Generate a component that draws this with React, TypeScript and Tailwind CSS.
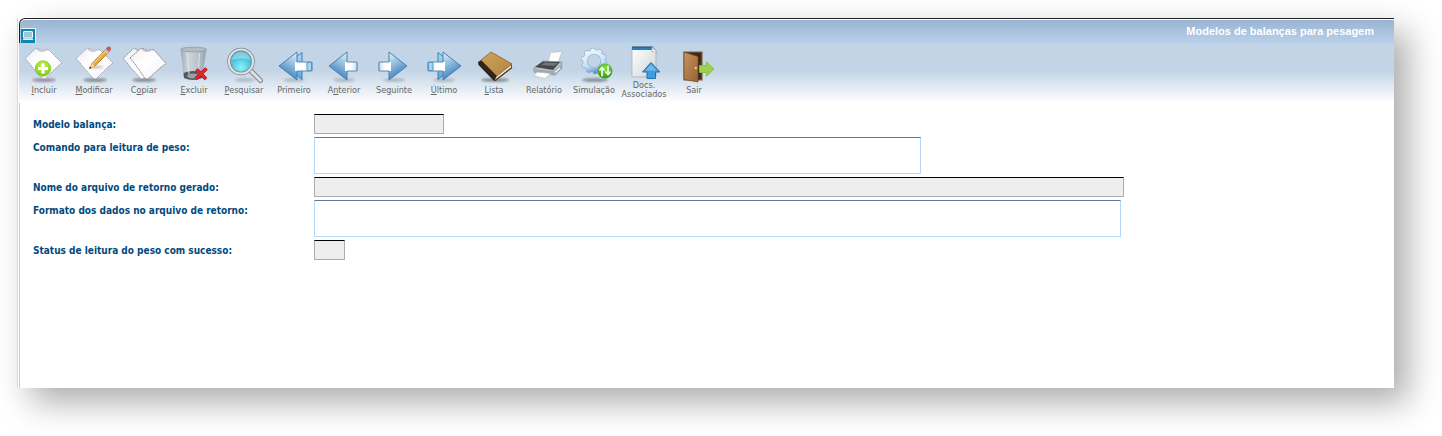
import type { ReactNode } from 'react'

// Glossy gradients shared by the toolbar drawings
function IconDefs() {
  return (
    <svg className="absolute h-0 w-0" aria-hidden="true">
      <defs>
        <linearGradient id="paper" x1="0" y1="0" x2="1" y2="1">
          <stop offset="0" stopColor="#ececf0" />
          <stop offset="0.4" stopColor="#ffffff" />
          <stop offset="1" stopColor="#f4f4f6" />
        </linearGradient>
        <radialGradient id="green" cx="0.5" cy="0.3" r="0.7">
          <stop offset="0" stopColor="#c8f04e" />
          <stop offset="1" stopColor="#7ccb1c" />
        </radialGradient>
        <radialGradient id="darkGreen" cx="0.5" cy="0.3" r="0.7">
          <stop offset="0" stopColor="#8ade4a" />
          <stop offset="1" stopColor="#2a9a12" />
        </radialGradient>
        <linearGradient id="arrowHead" x1="0.7" y1="0" x2="0.3" y2="1">
          <stop offset="0" stopColor="#d2e8f6" />
          <stop offset="0.45" stopColor="#84b2d8" />
          <stop offset="0.75" stopColor="#4f8cc2" />
          <stop offset="1" stopColor="#7db4dc" />
        </linearGradient>
        <linearGradient id="arrowBack" x1="0" y1="0" x2="0" y2="1">
          <stop offset="0" stopColor="#a9dcf6" />
          <stop offset="1" stopColor="#58a4da" />
        </linearGradient>
        <linearGradient id="arrowShaft" x1="0" y1="0" x2="1" y2="0">
          <stop offset="0" stopColor="#ffffff" />
          <stop offset="0.5" stopColor="#ffffff" />
          <stop offset="1" stopColor="#c3e2f7" />
        </linearGradient>
        <linearGradient id="bin" x1="0" y1="0" x2="1" y2="0">
          <stop offset="0" stopColor="#98a4ad" />
          <stop offset="0.3" stopColor="#cfd7dd" />
          <stop offset="0.7" stopColor="#b4bec6" />
          <stop offset="1" stopColor="#929da6" />
        </linearGradient>
        <radialGradient id="lens" cx="0.5" cy="0.75" r="0.75">
          <stop offset="0" stopColor="#8ff0fa" />
          <stop offset="0.6" stopColor="#45c0dc" />
          <stop offset="1" stopColor="#2a9cc4" />
        </radialGradient>
        <linearGradient id="leather" x1="0" y1="0" x2="1" y2="1">
          <stop offset="0" stopColor="#d2a55a" />
          <stop offset="1" stopColor="#b08340" />
        </linearGradient>
        <linearGradient id="gear" gradientUnits="userSpaceOnUse" x1="16" y1="4" x2="24" y2="29">
          <stop offset="0" stopColor="#f2fafe" />
          <stop offset="0.65" stopColor="#c3def4" />
          <stop offset="1" stopColor="#4f7fc0" />
        </linearGradient>
        <linearGradient id="sheet" x1="0" y1="0" x2="1" y2="1">
          <stop offset="0" stopColor="#ffffff" />
          <stop offset="1" stopColor="#cfd3d6" />
        </linearGradient>
        <linearGradient id="door" x1="0" y1="0" x2="1" y2="1">
          <stop offset="0" stopColor="#c8935c" />
          <stop offset="1" stopColor="#946435" />
        </linearGradient>
        <filter id="soft" x="-30%" y="-100%" width="160%" height="300%">
          <feGaussianBlur stdDeviation="1" />
        </filter>
      </defs>
    </svg>
  )
}

function Icon({ children }: { children: ReactNode }) {
  return (
    <svg viewBox="0 0 44 36" className="h-9 w-11 overflow-visible" aria-hidden="true">
      {children}
    </svg>
  )
}

function Ground({ cx = 22, rx = 12, fill = '#6d7278' }: { cx?: number; rx?: number; fill?: string }) {
  return <ellipse cx={cx} cy="35" rx={rx} ry="2" fill={fill} opacity="0.7" filter="url(#soft)" />
}

function Shirt({ x = 0, stroke = '#a9a9b4' }: { x?: number; stroke?: string }) {
  return (
    <g transform={`translate(${x} 0)`}>
      <path
        d="M3 13.5 L13 4 Q15 3 17 4 Q20 6.5 24 4.5 L27 5 L31 9 L40 18 L35 22 L24 33 Q22 34.5 20 33 L11 23 L8 19 Z"
        fill="url(#paper)"
        stroke={stroke}
        strokeWidth="1"
        strokeDasharray="2 0.6"
      />
      <path d="M14.5 4.5 Q19 9 25.5 5 L23 4.5 Q19 6 16 4 Z" fill="#c9c9cf" />
    </g>
  )
}

function InsertIcon() {
  return (
    <Icon>
      <Ground fill="#8a6c90" />
      <Shirt stroke="#a99fc0" />
      <circle cx="21" cy="23.5" r="7.8" fill="url(#green)" stroke="#7cc024" strokeWidth="0.6" />
      <path d="M21 18.5v10M16 23.5h10" stroke="#fff" strokeWidth="3.2" />
    </Icon>
  )
}

function EditIcon() {
  return (
    <Icon>
      <Ground cx={23} />
      <Shirt x={1} />
      <ellipse cx="24" cy="22" rx="7" ry="1.5" fill="#9a9a9a" opacity="0.6" filter="url(#soft)" />
      <path d="M17.5 23.5 L20 18.5 L34.5 3.5 L37.5 6.5 L22.5 21.5 Z" fill="#f7a62b" stroke="#9a6420" strokeWidth="0.7" />
      <path d="M20.5 19.5 L34 5.5" stroke="#ffe08a" strokeWidth="1" />
      <path d="M17.5 23.5 L20 18.5 L22.5 21.5 Z" fill="#f5deb0" />
      <path d="M17 24 L18.4 21.6 L19.6 22.8 Z" fill="#333" />
      <path d="M33 5 L36 8" stroke="#c9ced4" strokeWidth="2" />
      <circle cx="36.8" cy="3.8" r="2.3" fill="#c4586a" />
    </Icon>
  )
}

function CopyIcon() {
  return (
    <Icon>
      <Ground />
      <Shirt x={-2} stroke="#9c9ca2" />
      <path
        d="M8 13 L18 4 Q20 3 22 4 Q25 6.5 29 4.5 L32 5 L44 18.5 L38 23 L27 33 Q24 35 22 32 L13 19 Z"
        fill="url(#paper)"
        stroke="#8f8f96"
        strokeWidth="1"
        strokeDasharray="2 0.6"
      />
      <path d="M19.5 4.5 Q24 9 30.5 5 L28 4.5 Q24 6 21 4 Z" fill="#c0c0c6" />
    </Icon>
  )
}

function DeleteIcon() {
  return (
    <Icon>
      <path d="M8.5 4.5 L12 33 Q21 37 30 33 L34.5 4.5 Z" fill="url(#bin)" opacity="0.9" />
      <path d="M11.5 28 L12 33 Q21 37 30 33 L31 28 Q21 24 11.5 28 Z" fill="#50575d" />
      <ellipse cx="21" cy="31" rx="6" ry="2.5" fill="#9aa1a6" />
      <path d="M15 8 L17 29M27.5 8 L26 29" stroke="#dfe5ea" strokeWidth="1.2" opacity="0.8" />
      <ellipse cx="21.5" cy="4.5" rx="13" ry="2.3" fill="#b4bdc4" stroke="#8e999f" strokeWidth="0.8" />
      <path d="M24.5 24.5 L34 34M34.5 23.5 L23.5 34" stroke="#b31217" strokeWidth="3.6" />
      <path d="M24.5 24.5 L34 34M34.5 23.5 L23.5 34" stroke="#e8262b" strokeWidth="2.2" />
    </Icon>
  )
}

function SearchIcon() {
  return (
    <Icon>
      <Ground cx={23} rx={10} fill="#a2adb6" />
      <path d="M28 25 L38.5 35.5" stroke="#80878e" strokeWidth="5" strokeLinecap="round" />
      <path d="M28 25 L38.5 35.5" stroke="#dfe3e7" strokeWidth="3" strokeLinecap="round" />
      <circle cx="19" cy="16.5" r="12" fill="url(#lens)" stroke="#80878e" strokeWidth="3.6" />
      <circle cx="19" cy="16.5" r="12" fill="none" stroke="#dce1e5" strokeWidth="2.2" />
      <path d="M9.5 15 Q11 7 19 6.5 Q27 7 28.5 15 Q19 11.5 9.5 15 Z" fill="#fff" opacity="0.35" />
    </Icon>
  )
}

// Left pointing by default; the mirror is used for the forward buttons
function ArrowIcon({ forward, double }: { forward?: boolean; double?: boolean }) {
  const end = double ? 40 : 35
  const mirror = double ? 46 : 42
  return (
    <Icon>
      <Ground rx={11} fill="#a2adb6" />
      <g transform={forward ? `translate(${mirror} 0) scale(-1 1)` : undefined}>
        {double && <path d="M23 13 L30 7.5 V34.5 L23 29 Z" fill="url(#arrowBack)" stroke="#3f7fb5" strokeWidth="1" />}
        <path d="M7 21 L25 7 V35 Z" fill="url(#arrowHead)" stroke="#4a80ad" strokeWidth="1" strokeLinejoin="round" />
        <path d={`M23 17 H${end - 1} Q${end} 17 ${end} 18 V25 Q${end} 26 ${end - 1} 26 H23 Z`} fill="url(#arrowShaft)" />
        <path d={`M25 17 H${end - 1} Q${end} 17 ${end} 18 V25 Q${end} 26 ${end - 1} 26 H25`} fill="none" stroke="#5a8bb5" strokeWidth="1.2" />
        {double && <path d="M35 17.5 H39.5 V25.5 H35 Z" fill="#a5d5f3" stroke="#5a95c4" strokeWidth="1" />}
      </g>
    </Icon>
  )
}

function ListIcon() {
  return (
    <Icon>
      <Ground cx={23} rx={14} />
      <path d="M22 32 L39.5 19 L39.5 23 L23 36 Z" fill="#f1ede2" stroke="#4c3a20" strokeWidth="0.8" />
      <path d="M6 17 L10 14.5 L25 31 L22 36 L6.5 20 Z" fill="#33241b" />
      <path d="M9 15 L19 7 L40 19 L25 31 Z" fill="url(#leather)" stroke="#8a6228" strokeWidth="0.8" />
      <path d="M23 35.5 L40 22.5" stroke="#54391a" strokeWidth="1.2" />
    </Icon>
  )
}

function ReportIcon() {
  return (
    <Icon>
      <path d="M26 17 L28.5 7.5 L40 6.5 L36 18 Z" fill="#fdfdfd" stroke="#c0c4c8" strokeWidth="0.8" />
      <path d="M12 23 L21 16 L39.5 17 L40 23 L33 30 L12 27 Z" fill="#b9bec2" stroke="#858b90" strokeWidth="0.8" />
      <path d="M13 22 L21 16.5 L38 17 L31 25 Z" fill="#43484d" />
      <path d="M19 20 L23 17.5 L36 18 L32 21 Z" fill="#6f757a" />
      <path d="M12 24 L31 26.5 L39 20 L39 24 L32.5 30 L12 27 Z" fill="#a1a7ab" />
      <path d="M33 27.5 L38 23" stroke="#f0f2f3" strokeWidth="1.5" />
      <path d="M15 27 L29 28.5 L23 33.5 L12 31 Z" fill="#fff" stroke="#b5babd" strokeWidth="0.7" />
    </Icon>
  )
}

function SimulationIcon() {
  return (
    <Icon>
      <Ground cx={23} rx={13} />
      {/* dashed outer ring forms the ten teeth of the gear */}
      <circle cx="22" cy="16" r="11.2" fill="none" stroke="#8badd0" strokeWidth="4" strokeDasharray="4.2 2.837" />
      <circle cx="22" cy="16" r="9" fill="none" stroke="#8badd0" strokeWidth="5" />
      <circle cx="22" cy="16" r="11.2" fill="none" stroke="url(#gear)" strokeWidth="2.8" strokeDasharray="3.4 3.637" strokeDashoffset="-0.4" />
      <circle cx="22" cy="16" r="9" fill="none" stroke="url(#gear)" strokeWidth="3.8" />
      <circle cx="33" cy="26" r="7.5" fill="url(#darkGreen)" />
      <path d="M30.8 30.5 H30 V24.500M27.500 25.500 L30 22.500 L32.500 25.500M35.200 21.500 H36 V27.500M33.500 26.500 L36 29.500 L38.500 26.500" fill="none" stroke="#fff" strokeWidth="1.6" />
    </Icon>
  )
}

function DocsIcon() {
  return (
    <Icon>
      <path d="M10 2 H31 L34 5 V32 H10 Z" fill="url(#sheet)" stroke="#a5aaae" strokeWidth="0.7" />
      <path d="M10 2 H31 L33 5 H10 Z" fill="#2e7fb9" />
      <path d="M10 2 H31" stroke="#1d5689" strokeWidth="1" />
      <path d="M30 2 L35 7 H30 Z" fill="#eef2f5" stroke="#9aa5ad" strokeWidth="0.6" />
      <path d="M29 17.5 L38 27 H33.500 V33.500 H25 V27 H20.500 Z" fill="#3e9ede" stroke="#2670a8" strokeWidth="1" strokeLinejoin="round" />
      <path d="M29 19.5 L34.500 25.500 H23.500 Z" fill="#6fbcec" />
    </Icon>
  )
}

function ExitIcon() {
  return (
    <Icon>
      <path d="M12 7 H30 V35 H12 Z" fill="#3b2a1c" stroke="#8c6236" strokeWidth="1.2" />
      <path d="M12 7 L26 11.500 V37 L12 34.500 Z" fill="url(#door)" stroke="#6e4521" strokeWidth="0.7" />
      <circle cx="23.800" cy="23" r="1.200" fill="#f2cf63" />
      <path d="M27.500 20.500 H34.500 V17 L42 24 L34.500 31 V27.500 H27.500 Z" fill="#9fcf4f" stroke="#8abb48" strokeWidth="0.9" />
    </Icon>
  )
}

const actions: { label: ReactNode; icon: ReactNode }[] = [
  { label: <><u>I</u>ncluir</>, icon: <InsertIcon /> },
  { label: <><u>M</u>odificar</>, icon: <EditIcon /> },
  { label: <>C<u>o</u>piar</>, icon: <CopyIcon /> },
  { label: <><u>E</u>xcluir</>, icon: <DeleteIcon /> },
  { label: <><u>P</u>esquisar</>, icon: <SearchIcon /> },
  { label: 'Primeiro', icon: <ArrowIcon double /> },
  { label: <>A<u>n</u>terior</>, icon: <ArrowIcon /> },
  { label: <>Se<u>g</u>uinte</>, icon: <ArrowIcon forward /> },
  { label: <><u>Ú</u>ltimo</>, icon: <ArrowIcon forward double /> },
  { label: <><u>L</u>ista</>, icon: <ListIcon /> },
  { label: 'Relatório', icon: <ReportIcon /> },
  { label: 'Simulação', icon: <SimulationIcon /> },
  { label: <><span className="block">Docs.</span><span className="block">Associados</span></>, icon: <DocsIcon /> },
  { label: 'Sair', icon: <ExitIcon /> },
]

function Toolbar() {
  return (
    <nav className="-ml-px flex h-[60px] bg-linear-to-b from-[#c2d4e6] from-45% to-white pt-0.5">
      {actions.map((action, i) => (
        <button key={i} type="button" className="flex w-[50px] shrink-0 flex-col items-center">
          {action.icon}
          <span className="flex h-[18px] items-center whitespace-nowrap text-center font-['DejaVu_Sans_Condensed','DejaVu_Sans',sans-serif] text-[9px] leading-[9px] text-[#666]">
            <span>{action.label}</span>
          </span>
        </button>
      ))}
    </nav>
  )
}

function TitleBar() {
  return (
    <header className="flex h-[25px] items-end justify-between rounded-tl-md border-l border-t border-[#222] bg-linear-to-b from-[#98b3d0] to-[#b9d0ea] pl-px shadow-[inset_0_1px_0_#fff]">
      <svg viewBox="0 0 15 15" className="h-[15px] w-[15px]" aria-hidden="true">
        <rect width="15" height="15" fill="#e8f2f8" />
        <rect width="14" height="14" y="1" fill="#0f86ad" />
        <rect x="2.500" y="3.500" width="9" height="6.500" rx="0.500" fill="#9fc6d6" stroke="#f2fafd" />
        <path d="M1.500 12 H12.500 L11.500 10.500 H2.500 Z" fill="#dff0f6" />
      </svg>
      <h1 className="self-center pr-5 font-['Liberation_Sans',Arial,sans-serif] text-[11px] font-bold leading-4 text-white">
        Modelos de balanças para pesagem
      </h1>
    </header>
  )
}

const inputClass =
  'block h-5 w-full border border-[#acacac] border-t-black bg-[#eee] px-1 text-[11px] outline-none'
const textareaClass =
  'block h-[37px] w-full resize-none border border-[#b5d7fc] border-t-[#5b7b9d] bg-white px-1 text-[11px] outline-none'

type Field = { id: string; label: string; width: string; multiline?: boolean }

const fields: Field[] = [
  { id: 'modelo', label: 'Modelo balança:', width: 'max-w-[130px]' },
  { id: 'comando', label: 'Comando para leitura de peso:', width: 'max-w-[607px]', multiline: true },
  { id: 'arquivo', label: 'Nome do arquivo de retorno gerado:', width: 'max-w-[810px]' },
  { id: 'formato', label: 'Formato dos dados no arquivo de retorno:', width: 'max-w-[807px]', multiline: true },
  { id: 'status', label: 'Status de leitura do peso com sucesso:', width: 'max-w-[31px]' },
]

export default function App() {
  return (
    <div className="bg-white pb-12 pl-[17px] pr-12 pt-[18px]">
      <IconDefs />
      <div className="border-l border-[#d8d8d8] bg-white pl-px shadow-[14px_14px_32px_rgba(0,0,0,0.33)]">
        <TitleBar />
        <main className="border-l border-[#b9d0e4]">
          <Toolbar />
          <form className="flex flex-col gap-[3px] pb-32 pl-[13px] pt-[11px]">
            {fields.map(field => (
              <div key={field.id} className="flex items-start">
                <label
                  htmlFor={field.id}
                  className="h-5 w-[281px] shrink-0 font-['DejaVu_Sans_Condensed','DejaVu_Sans',Verdana,sans-serif] text-[10px] font-bold leading-[22px] text-[#004a7f]"
                >
                  {field.label}
                </label>
                <div className={`grow ${field.width}`}>
                  {field.multiline ? (
                    <textarea id={field.id} className={textareaClass} />
                  ) : (
                    <input id={field.id} type="text" className={inputClass} />
                  )}
                </div>
              </div>
            ))}
          </form>
        </main>
      </div>
    </div>
  )
}
